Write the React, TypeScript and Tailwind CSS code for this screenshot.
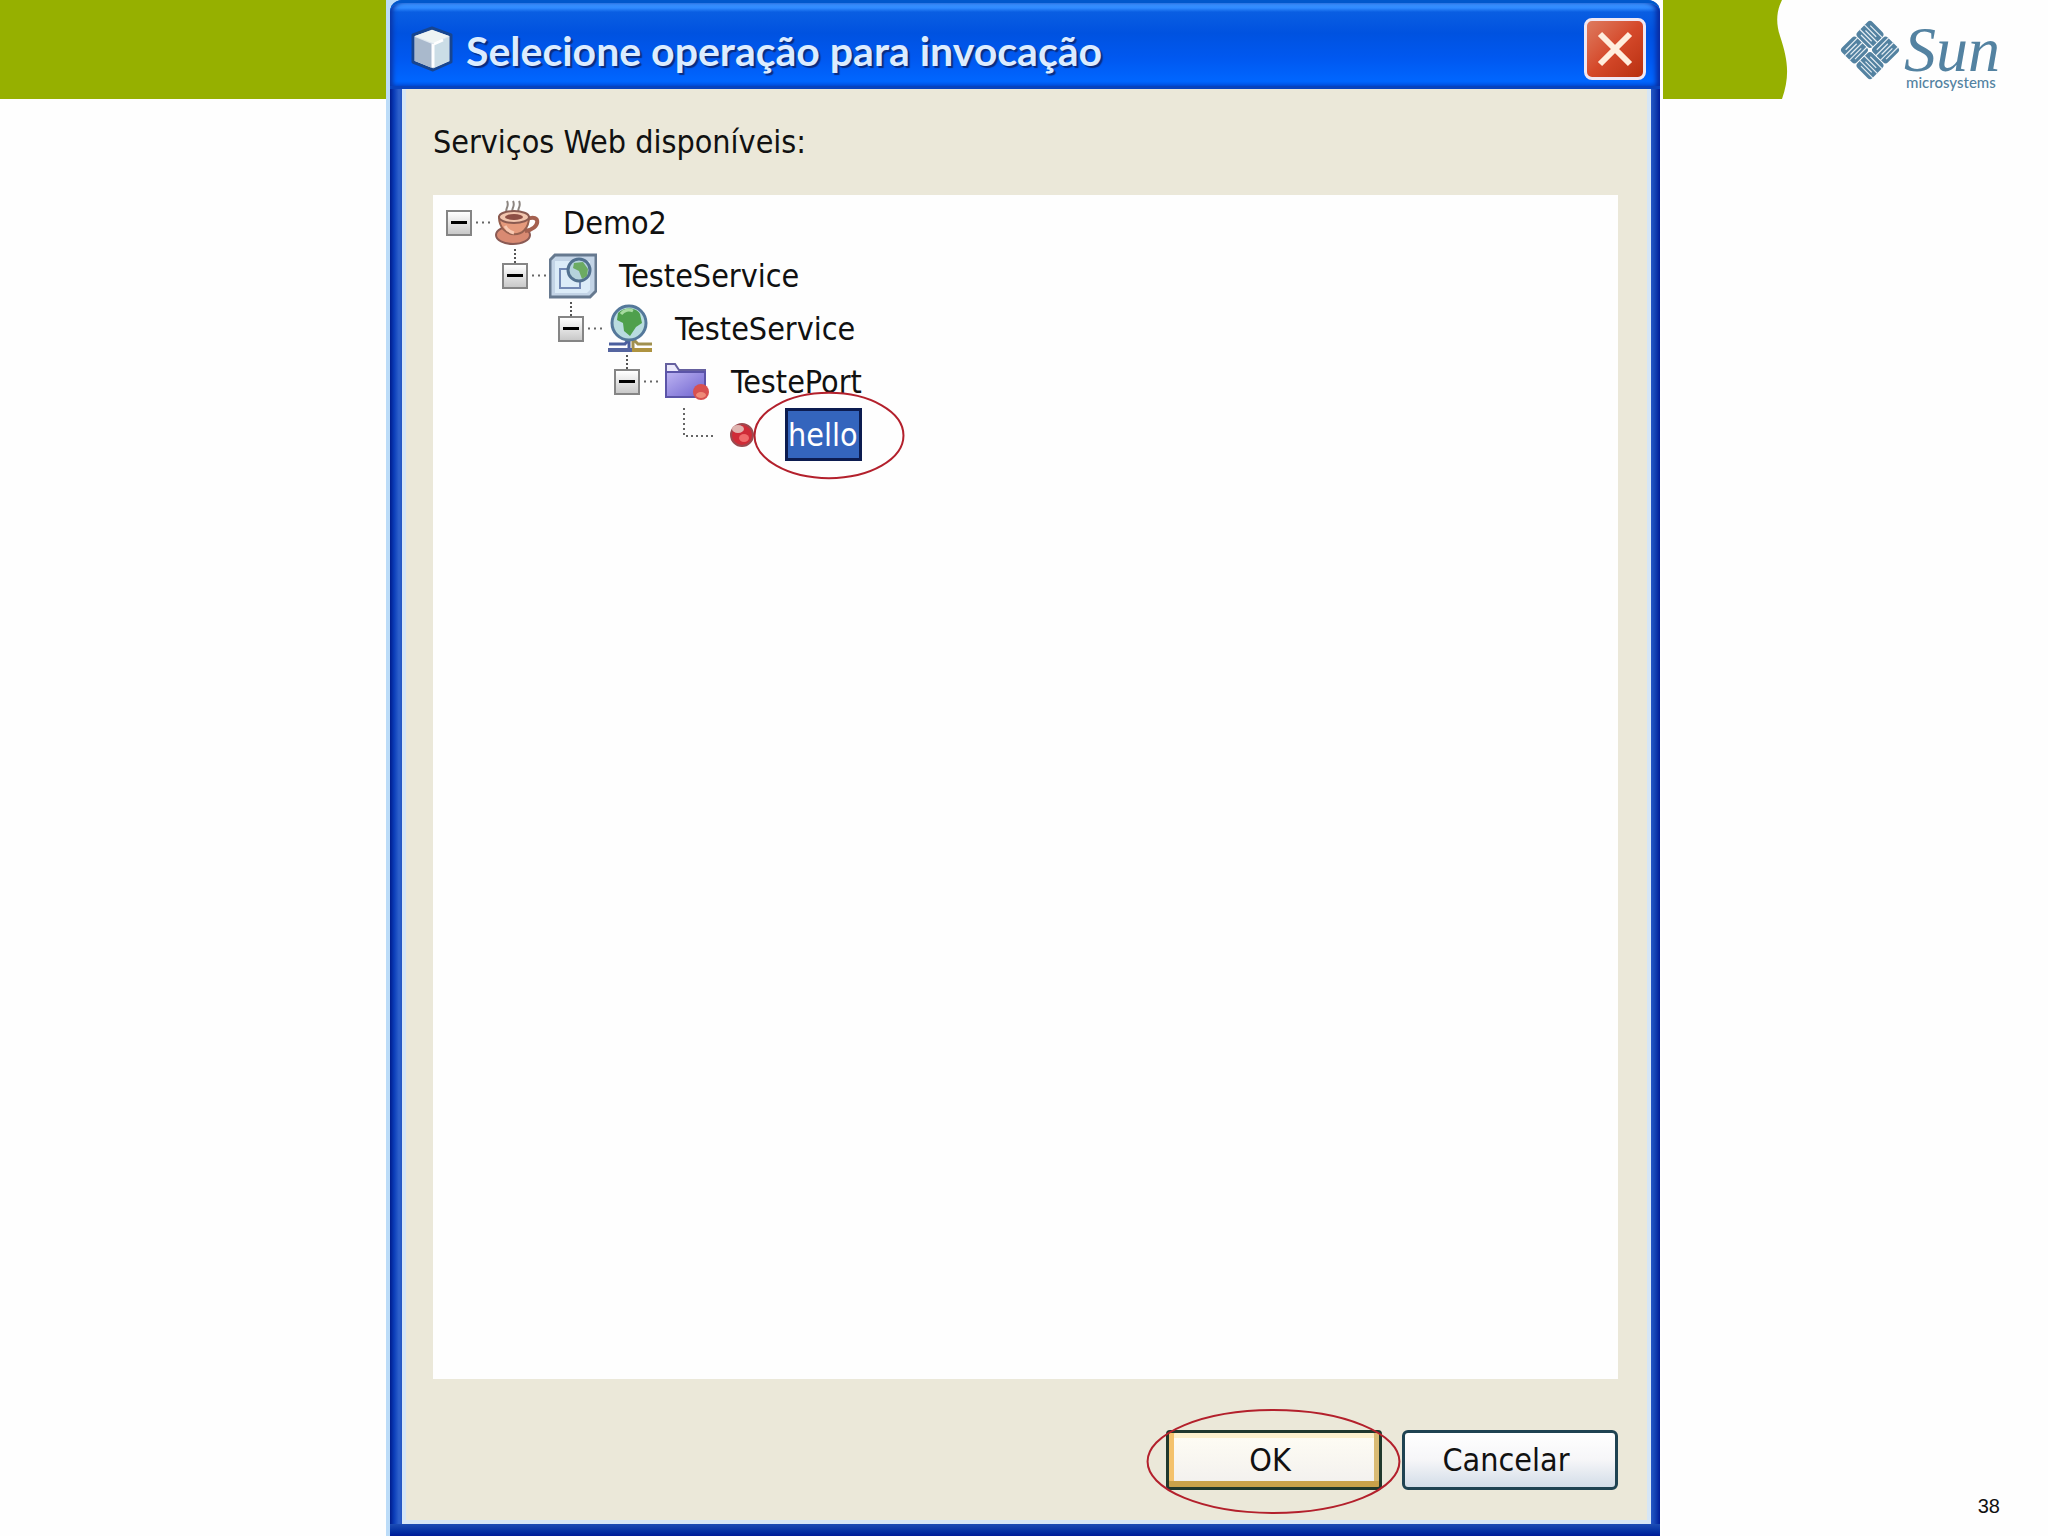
import type { ReactNode } from 'react';
import { clsx } from 'clsx';

function SunMark() {
  // each quadrant of the diamond is a block cut into a serpentine by thin slits
  const quadrants = [
    'translate(9 9) rotate(90 10 10)',
    'translate(31 9)',
    'translate(31 31) rotate(90 10 10)',
    'translate(9 31)',
  ];
  return (
    <svg viewBox="0 0 60 60" className="size-[60px]" aria-hidden="true">
      <g transform="rotate(45 30 30)">
        {quadrants.map((t) => (
          <g key={t} transform={t}>
            <rect width="21" height="21" x="-0.5" y="-0.5" rx="3.5" fill="#5382a1" />
            <path d="M3.6 -1V16M7.2 4V21M10.4 -1V16M13.6 4V21M16.8 -1V16" fill="none" stroke="#e4edf3" strokeWidth="1.2" />
          </g>
        ))}
      </g>
    </svg>
  );
}

function CubeIcon() {
  return (
    <svg viewBox="0 0 44 46" className="h-[46px] w-11" aria-hidden="true">
      <path d="M22 2 41 9v27L23 44 3 36V9z" fill="#dfe7ef" stroke="#17458f" strokeWidth="3" strokeLinejoin="round" />
      <path d="M22 4 39 10 23 17 5 10z" fill="#eef4f4" />
      <path d="M5 11 22 18v24L5 35z" fill="#a9b9cc" />
      <path d="M23 18 39 11v24L23 42z" fill="#cbdde6" />
      <path d="M23 18v23M24 18l9-4" stroke="#fff" strokeWidth="3" />
    </svg>
  );
}

function CupIcon() {
  return (
    <svg viewBox="0 0 48 48" className="size-12" aria-hidden="true">
      <path d="M14 14c-3-4 3-6 0-12M20 14c-3-4 3-6 0-12M26 14c-3-4 3-6 0-12" fill="none" stroke="#8c8580" strokeWidth="2" />
      <ellipse cx="20" cy="36" rx="17" ry="9" fill="#d98a72" stroke="#8a5a54" strokeWidth="2" />
      <path d="M34 20c14-6 14 10-2 12" fill="none" stroke="#a4604f" strokeWidth="4" />
      <path d="M6 18c0 22 30 24 30 0z" fill="#e59a7c" stroke="#96604f" strokeWidth="2" />
      <ellipse cx="21" cy="18" rx="15" ry="6" fill="#f2c6ae" stroke="#8a5a50" strokeWidth="2" />
      <ellipse cx="21" cy="18" rx="9" ry="3" fill="#8d4f45" />
      <path d="M12 27c2 4 5 6 9 7" fill="none" stroke="#f8c9b2" strokeWidth="3" />
    </svg>
  );
}

function ModuleIcon() {
  return (
    <svg viewBox="0 0 48 48" className="size-12" aria-hidden="true">
      <path d="M6 3h41v36l-6 6H1V8z" fill="#c3d4e6" stroke="#66798f" strokeWidth="3" />
      <path d="M6 9h35v29l-3 3H6z" fill="#dcecf8" />
      <path d="M20 17H11v19h20v-6" fill="none" stroke="#7389b4" strokeWidth="2" />
      <circle cx="30" cy="18" r="11" fill="#b5d3dc" stroke="#52718f" strokeWidth="3" />
      <path d="M25 11l9-1 5 7-1 7-5 3-3-8-6-3z" fill="#6cab62" />
    </svg>
  );
}

function GlobeIcon() {
  return (
    <svg viewBox="-2 0 48 50" className="h-[50px] w-12" aria-hidden="true">
      <path d="M2 40h16l4-5v9" fill="none" stroke="#4b5f9e" strokeWidth="3" />
      <path d="M45 40H31l-5-5v9" fill="none" stroke="#a0904f" strokeWidth="3" />
      <path d="M1 46h24" stroke="#5565a0" strokeWidth="4" />
      <path d="M25 46h20" stroke="#ae9340" strokeWidth="4" />
      <circle cx="22" cy="19" r="17" fill="#b9dcdf" stroke="#54789a" strokeWidth="3" />
      <path d="M11 9c6-6 18-6 22 1l2 9-6 4-6 9-6-5-1-8-6-3z" fill="#4fa04c" />
      <path d="M14 10c3-4 8-5 12-3" stroke="#a7dba0" strokeWidth="3" fill="none" />
    </svg>
  );
}

function FolderIcon() {
  return (
    <svg viewBox="-2 0 48 48" className="size-12" aria-hidden="true">
      <defs>
        <linearGradient id="folder" x1="0" y1="0" x2="1" y2="1">
          <stop offset="0" stopColor="#bdb4f2" />
          <stop offset="1" stopColor="#6f63cf" />
        </linearGradient>
      </defs>
      <path d="M3 39V6h9l4 6h26v27z" fill="#eceafc" stroke="#65609f" strokeWidth="2" />
      <path d="M3 14h39v25H3z" fill="url(#folder)" stroke="#5b54a8" strokeWidth="2" />
      <circle cx="38" cy="34" r="8" fill="#d8504f" />
      <ellipse cx="38" cy="37" rx="5" ry="3" fill="#ee8a78" />
    </svg>
  );
}

function BallIcon() {
  return (
    <svg viewBox="0 0 48 48" className="size-12" aria-hidden="true">
      <circle cx="25" cy="24" r="11" fill="#cf2c38" stroke="#9c4a50" strokeWidth="2" />
      <ellipse cx="21" cy="18" rx="6" ry="4" fill="#e0b4b0" />
      <ellipse cx="27" cy="27" rx="5" ry="4" fill="#f06b6b" />
    </svg>
  );
}

type Node = { label: string; icon: ReactNode; indent: string; leaf?: boolean };

const nodes: Node[] = [
  { label: 'Demo2', icon: <CupIcon />, indent: 'pl-[13px]' },
  { label: 'TesteService', icon: <ModuleIcon />, indent: 'pl-[69px]' },
  { label: 'TesteService', icon: <GlobeIcon />, indent: 'pl-[125px]' },
  { label: 'TestePort', icon: <FolderIcon />, indent: 'pl-[181px]' },
  { label: 'hello', icon: <BallIcon />, indent: 'pl-[237px]', leaf: true },
];

function Ring({ className }: { className: string }) {
  return (
    <svg viewBox="0 0 100 100" preserveAspectRatio="none" aria-hidden="true" className={clsx('pointer-events-none absolute z-10 overflow-visible', className)}>
      <ellipse cx="50" cy="50" rx="49" ry="49" fill="none" stroke="#b3202c" strokeWidth="2" vectorEffect="non-scaling-stroke" />
    </svg>
  );
}

function TreeRow({ node, first }: { node: Node; first: boolean }) {
  return (
    <li className={clsx('flex h-[53px] items-center', node.indent)}>
      {node.leaf ? (
        <svg viewBox="0 0 47 53" className="h-[53px] w-[47px]" aria-hidden="true">
          <path d="M14 0V28H46" fill="none" stroke="#666" strokeWidth="2" strokeDasharray="2 3" />
        </svg>
      ) : (
        <>
          <div className="flex h-full w-[26px] flex-col items-center">
            <div className={clsx('w-0 flex-1', !first && 'border-l-2 border-dotted border-[#555]')} />
            <button
              type="button"
              aria-label={`Recolher ${node.label}`}
              className="flex size-[26px] items-center justify-center border-2 border-[#858585] bg-linear-to-b from-white to-[#c9c9c9]"
            >
              <span className="h-[3px] w-4 bg-black" />
            </button>
            <div className="flex-1" />
          </div>
          <svg viewBox="0 0 21 3" className="h-[3px] w-[21px]" aria-hidden="true">
            <path d="M4 1.5H19" stroke="#666" strokeWidth="2" strokeDasharray="2 4" />
          </svg>
        </>
      )}
      {node.icon}
      {node.leaf ? (
        <div className="relative ml-5">
          <span className="flex h-[53px] w-[77px] items-center border-[3px] border-[#0c1c50] bg-[#3465bd] text-white">
            {node.label}
          </span>
          <Ring className="-top-4 -left-8 h-[87px] w-[152px]" />
        </div>
      ) : (
        <span className="ml-[22px]">{node.label}</span>
      )}
    </li>
  );
}

function Dialog() {
  return (
    <section
      aria-labelledby="dialog-title"
      className="mr-0.5 ml-1 flex flex-1 flex-col rounded-t-xl bg-[linear-gradient(90deg,#001c8c_0,#0a3cb8_4px,#2f62cc_9px,#2456c4_12px,#2456c4_calc(100%_-_9px),#1443b4_calc(100%_-_5px),#001c98_100%)]"
    >
      <header className="flex h-[89px] items-center rounded-t-xl border-t-3 border-b-3 border-t-[#0058cc] border-b-[#0843bd] bg-[linear-gradient(180deg,#3f97ff_0,#2f8bff_5px,#0a5ee2_9px,#0052e0_30px,#0058f0_55px,#0066ff_78px,#0058e8_100%)] pt-2 pr-[14px] pl-5 shadow-[inset_5px_0_4px_-2px_#0a36a8,inset_-6px_0_5px_-2px_#0a2ca0]">
        <CubeIcon />
        <h1
          id="dialog-title"
          className="ml-3 flex-1 pt-1 font-[Lato,sans-serif] text-[41px] leading-10 font-bold text-[#dcecff] [text-shadow:2px_2px_1px_#0a2c80]"
        >
          Selecione operação para invocação
        </h1>
        <button
          type="button"
          aria-label="Fechar"
          className="flex size-[62px] items-center justify-center rounded-lg border-3 border-[#f0e8f4] bg-linear-to-br from-[#dd7a5e] via-[#d5492a] to-[#b8300f]"
        >
          <svg viewBox="0 0 40 40" className="size-10" aria-hidden="true">
            <path d="M5 5 35 35M35 5 5 35" stroke="#ffeedd" strokeWidth="6" />
          </svg>
        </button>
      </header>

      <div className="mr-[9px] ml-3 flex flex-1 flex-col border-x-4 border-b-4 border-[#d6e6f6] bg-[#ebe8d9] pt-8 pr-[29px] pb-[30px] pl-[27px] text-[32px]">
        <h2 id="tree-label" className="mb-8 leading-[42px]">
          Serviços Web disponíveis:
        </h2>
        <ul aria-labelledby="tree-label" className="flex-1 bg-[#fefefe] pt-px leading-10">
          {nodes.map((node, i) => (
            <TreeRow key={i} node={node} first={i === 0} />
          ))}
        </ul>
        <div className="mt-[51px] flex justify-end gap-5">
          <div className="relative">
            <button
              type="button"
              className="h-[60px] w-[216px] rounded-sm border-3 border-[#20382c] bg-linear-to-b from-[#fffdf4] to-[#f2f0ee] pr-2 shadow-[inset_0_-6px_0_#c9a24a,inset_5px_0_0_#f4c26c,inset_-5px_0_0_#d9bb74,inset_0_5px_0_#fdf0cc]"
            >
              OK
            </button>
            <Ring className="-top-[21px] -left-[21px] h-[105px] w-[257px]" />
          </div>
          <button
            type="button"
            className="h-[60px] w-[216px] rounded-md border-3 border-[#1f4352] bg-linear-to-b from-white via-[#f6f6f8] to-[#d3dde8] pr-2"
          >
            Cancelar
          </button>
        </div>
      </div>
      <div className="h-3 bg-linear-to-b from-[#1c4cb4] to-[#001a98]" />
    </section>
  );
}

export default function App() {
  return (
    <main className="grid min-h-screen grid-cols-[386fr_1276fr_386fr] bg-[#fefefe] font-['DejaVu_Sans_Condensed','Noto_Sans',sans-serif] text-[#111]">
      <div className="h-[99px] bg-[#96b000]" />
      <div className="flex flex-col bg-linear-to-r from-[#bcdcf8] to-white">
        <Dialog />
      </div>
      <aside className="flex flex-col justify-between">
        <div className="flex items-start justify-between pr-12">
          <svg viewBox="0 0 126 99" className="h-[99px] w-[126px]" aria-hidden="true">
            <path d="M1 0H120C114 12 114 24 118 36C126 60 128 76 120 99H1z" fill="#96b000" />
          </svg>
          <div className="flex items-start pt-5 text-[#5382a1]">
            <SunMark />
            <div className="flex flex-col pl-1">
              <span className="font-['Liberation_Serif',serif] text-[64px] leading-[60px] font-medium italic">Sun</span>
              <span className="-mt-1.5 pl-0.5 font-[Lato,sans-serif] text-[15px] leading-4 font-medium">microsystems</span>
            </div>
          </div>
        </div>
        <p className="pr-12 pb-4 text-right font-['Liberation_Sans_Narrow','Liberation_Sans',sans-serif] text-xl leading-7">38</p>
      </aside>
    </main>
  );
}
